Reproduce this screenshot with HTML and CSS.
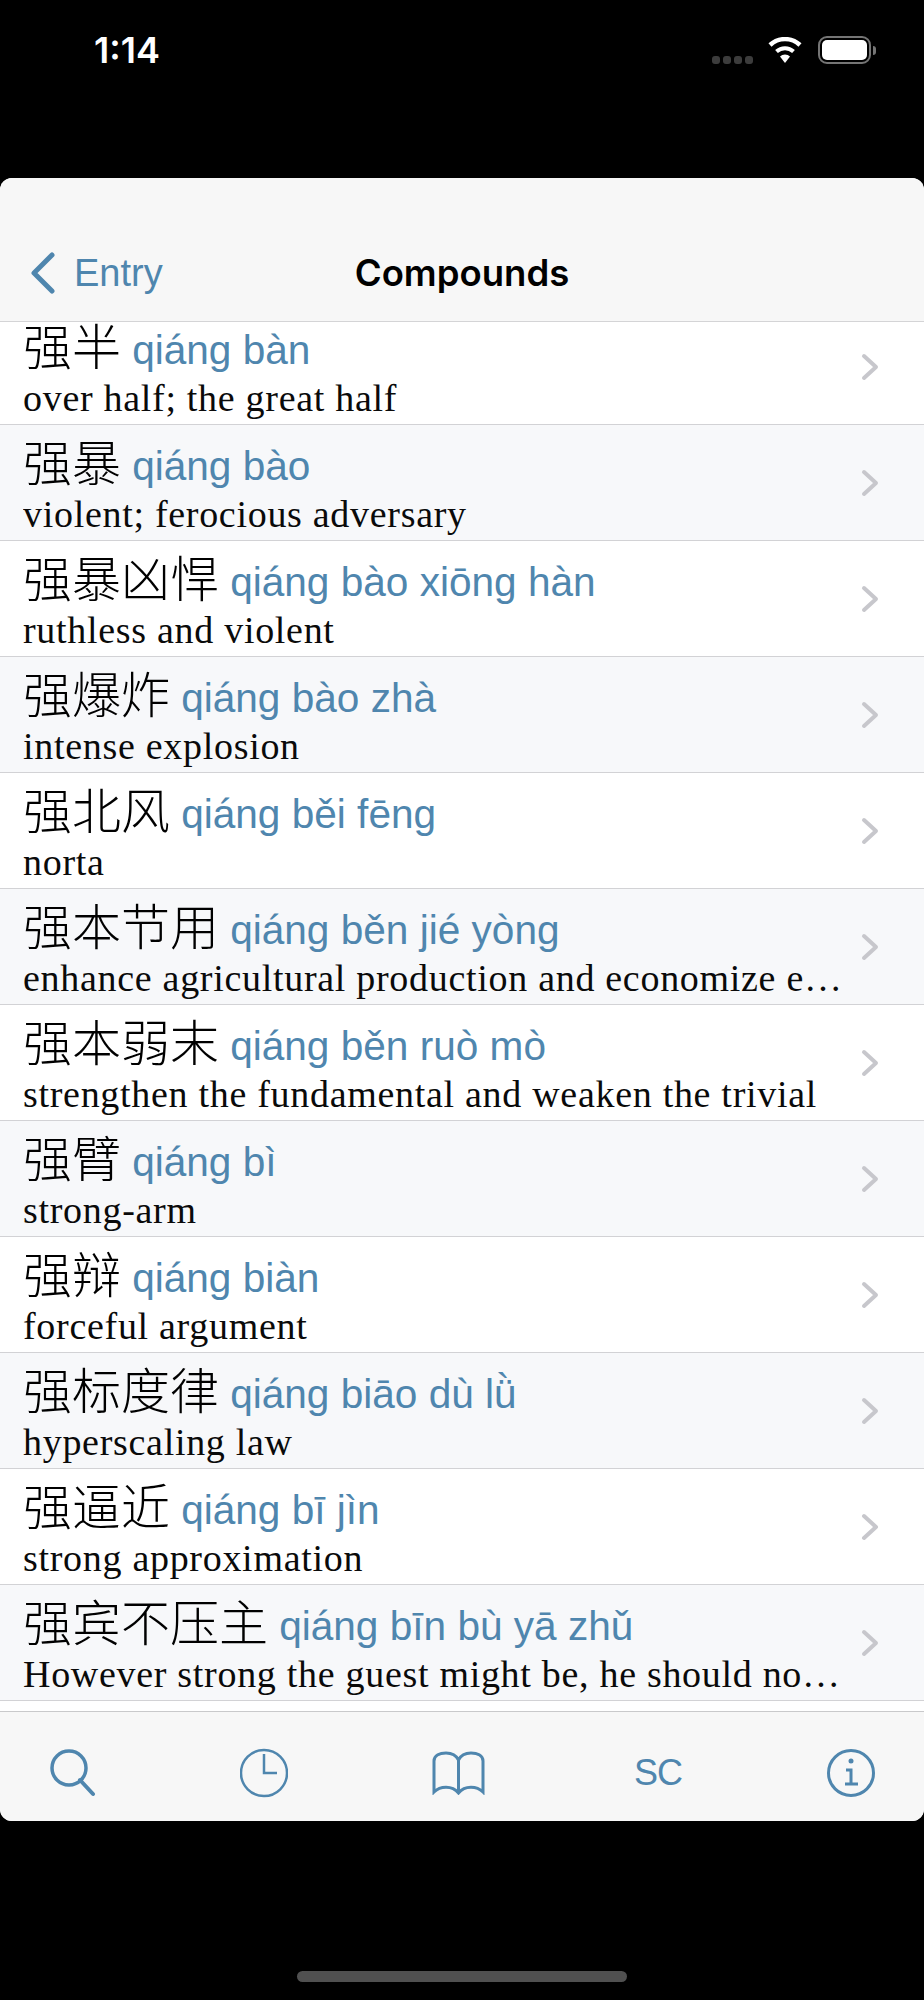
FILE: index.html
```html
<!DOCTYPE html>
<html lang="en">
<head>
    <meta charset="UTF-8">
    <meta name="viewport" content="width=device-width, initial-scale=1.0">
    <title>Compounds</title>
    <link rel="stylesheet" href="styles.css">
</head>
<body>
    <div class="status-bar">
        <span class="status-time">1:14</span>
        <div class="status-icons">
            <div class="signal"><i></i><i></i><i></i><i></i></div>
            <svg class="wifi" width="36" height="26" viewBox="0 0 36 26">
                <path d="M18 26l-5-6.500a7 7 0 0 1 10 0z" fill="#fff"/>
                <path d="M9.500 14.500a12.500 12.500 0 0 1 17 0" fill="none" stroke="#fff" stroke-width="4"/>
                <path d="M3 8a22 22 0 0 1 30 0" fill="none" stroke="#fff" stroke-width="4.500"/>
            </svg>
            <div class="battery"><div class="battery-level"></div></div>
            <div class="battery-nub"></div>
        </div>
    </div>

    <div class="panel">
        <div class="nav-bar">
            <div class="nav-back">
                <svg width="25" height="42" viewBox="0 0 25 42">
                    <path d="M22 3L4 21l18 18" fill="none" stroke="#4f86ae" stroke-width="5" stroke-linecap="round" stroke-linejoin="round"/>
                </svg>
                <span>Entry</span>
            </div>
            <div class="nav-title">Compounds</div>
        </div>

        <div class="list">
            <div class="list-inner">
                <div class="row">
                    <div class="row-text">
                        <div class="row-head"><span class="hanzi">强半</span> <span class="pinyin">qiáng bàn</span></div>
                        <div class="row-def">over half; the great half</div>
                    </div>
                    <svg class="chevron" width="18" height="28" viewBox="0 0 18 28"><path d="M3 3l12 11L3 25" /></svg>
                </div>
                <div class="row">
                    <div class="row-text">
                        <div class="row-head"><span class="hanzi">强暴</span> <span class="pinyin">qiáng bào</span></div>
                        <div class="row-def">violent; ferocious adversary</div>
                    </div>
                    <svg class="chevron" width="18" height="28" viewBox="0 0 18 28"><path d="M3 3l12 11L3 25" /></svg>
                </div>
                <div class="row">
                    <div class="row-text">
                        <div class="row-head"><span class="hanzi">强暴凶悍</span> <span class="pinyin">qiáng bào xiōng hàn</span></div>
                        <div class="row-def">ruthless and violent</div>
                    </div>
                    <svg class="chevron" width="18" height="28" viewBox="0 0 18 28"><path d="M3 3l12 11L3 25" /></svg>
                </div>
                <div class="row">
                    <div class="row-text">
                        <div class="row-head"><span class="hanzi">强爆炸</span> <span class="pinyin">qiáng bào zhà</span></div>
                        <div class="row-def">intense explosion</div>
                    </div>
                    <svg class="chevron" width="18" height="28" viewBox="0 0 18 28"><path d="M3 3l12 11L3 25" /></svg>
                </div>
                <div class="row">
                    <div class="row-text">
                        <div class="row-head"><span class="hanzi">强北风</span> <span class="pinyin">qiáng běi fēng</span></div>
                        <div class="row-def">norta</div>
                    </div>
                    <svg class="chevron" width="18" height="28" viewBox="0 0 18 28"><path d="M3 3l12 11L3 25" /></svg>
                </div>
                <div class="row">
                    <div class="row-text">
                        <div class="row-head"><span class="hanzi">强本节用</span> <span class="pinyin">qiáng běn jié yòng</span></div>
                        <div class="row-def">enhance agricultural production and economize expenditure</div>
                    </div>
                    <svg class="chevron" width="18" height="28" viewBox="0 0 18 28"><path d="M3 3l12 11L3 25" /></svg>
                </div>
                <div class="row">
                    <div class="row-text">
                        <div class="row-head"><span class="hanzi">强本弱末</span> <span class="pinyin">qiáng běn ruò mò</span></div>
                        <div class="row-def">strengthen the fundamental and weaken the trivial</div>
                    </div>
                    <svg class="chevron" width="18" height="28" viewBox="0 0 18 28"><path d="M3 3l12 11L3 25" /></svg>
                </div>
                <div class="row">
                    <div class="row-text">
                        <div class="row-head"><span class="hanzi">强臂</span> <span class="pinyin">qiáng bì</span></div>
                        <div class="row-def">strong-arm</div>
                    </div>
                    <svg class="chevron" width="18" height="28" viewBox="0 0 18 28"><path d="M3 3l12 11L3 25" /></svg>
                </div>
                <div class="row">
                    <div class="row-text">
                        <div class="row-head"><span class="hanzi">强辩</span> <span class="pinyin">qiáng biàn</span></div>
                        <div class="row-def">forceful argument</div>
                    </div>
                    <svg class="chevron" width="18" height="28" viewBox="0 0 18 28"><path d="M3 3l12 11L3 25" /></svg>
                </div>
                <div class="row">
                    <div class="row-text">
                        <div class="row-head"><span class="hanzi">强标度律</span> <span class="pinyin">qiáng biāo dù lǜ</span></div>
                        <div class="row-def">hyperscaling law</div>
                    </div>
                    <svg class="chevron" width="18" height="28" viewBox="0 0 18 28"><path d="M3 3l12 11L3 25" /></svg>
                </div>
                <div class="row">
                    <div class="row-text">
                        <div class="row-head"><span class="hanzi">强逼近</span> <span class="pinyin">qiáng bī jìn</span></div>
                        <div class="row-def">strong approximation</div>
                    </div>
                    <svg class="chevron" width="18" height="28" viewBox="0 0 18 28"><path d="M3 3l12 11L3 25" /></svg>
                </div>
                <div class="row">
                    <div class="row-text">
                        <div class="row-head"><span class="hanzi">强宾不压主</span> <span class="pinyin">qiáng bīn bù yā zhǔ</span></div>
                        <div class="row-def">However strong the guest might be, he should not overshadow the host</div>
                    </div>
                    <svg class="chevron" width="18" height="28" viewBox="0 0 18 28"><path d="M3 3l12 11L3 25" /></svg>
                </div>
            </div>
        </div>

        <div class="tab-bar">
            <svg width="46" height="48" viewBox="0 0 46 48" class="tab-icon tab-search">
                <circle cx="19" cy="19" r="17" />
                <path d="M30 31l13 14" stroke-width="4" stroke-linecap="round"/>
            </svg>
            <svg width="48" height="50" viewBox="0 0 48 50" class="tab-icon tab-thin">
                <circle cx="24" cy="25" r="23" />
                <path d="M24 6v19h13" />
            </svg>
            <svg width="53" height="44" viewBox="0 0 53 44" class="tab-icon">
                <path d="M26.500 9C24 4 19 2 14 2 8 2 2 4 2 10v31c6-6 18-7 24.500 1C33 34 45 35 51 41V10c0-6-6-8-12-8-5 0-10 2-12.500 7z" />
                <path d="M26.500 9v33" />
            </svg>
            <div class="tab-sc">SC</div>
            <svg width="48" height="50" viewBox="0 0 48 50" class="tab-icon">
                <circle cx="24" cy="25" r="22.500" />
                <circle cx="24" cy="13" r="2.500" class="tab-dot"/>
                <path d="M19 22h5v14M18 36h13" />
            </svg>
        </div>
    </div>

    <div class="home-bar"></div>
</body>
</html>
```

FILE: styles.css
```css
body {
    margin: 0;
    height: 2000px;
    background-color: #000;
    font-family: "Liberation Sans", Arial, sans-serif;
    display: flex;
    flex-direction: column;
    overflow: hidden;
}

/* status bar */
.status-bar {
    height: 178px;
    flex-shrink: 0;
    box-sizing: border-box;
    padding: 32px 48px 0 94px;
    display: flex;
    justify-content: space-between;
    align-items: flex-start;
    color: #fff;
}

.status-time {
    font-family: Inter, sans-serif;
    font-size: 36px;
    font-weight: 600;
    line-height: 36px;
}

.status-icons {
    display: flex;
    align-items: center;
    margin-top: 4px;
}

.signal {
    display: flex;
    gap: 3px;
    margin-top: 20px;
    margin-right: 14px;
}

.signal i {
    width: 8px;
    height: 8px;
    border-radius: 3px;
    background-color: #3c3c3c;
}

.wifi {
    margin-right: 15px;
}

.battery {
    width: 53px;
    height: 28px;
    box-sizing: border-box;
    border: 2px solid #757575;
    border-radius: 9px;
    padding: 2px;
}

.battery-level {
    height: 100%;
    background-color: #fff;
    border-radius: 5px;
}

.battery-nub {
    width: 3px;
    height: 9px;
    margin-left: 2px;
    background-color: #757575;
    border-radius: 0 3px 3px 0;
}

/* main panel */
.panel {
    height: 1643px;
    flex-shrink: 0;
    display: flex;
    flex-direction: column;
    background-color: #fff;
    border-radius: 12px;
    overflow: hidden;
}

.nav-bar {
    height: 144px;
    flex-shrink: 0;
    box-sizing: border-box;
    padding: 53px 0 0 30px;
    display: grid;
    grid-template-columns: 1fr auto 1fr;
    grid-template-rows: 84px;
    align-items: center;
    background-color: #f7f7f7;
    border-bottom: 1px solid #d4d4d6;
}

.nav-back {
    display: flex;
    align-items: center;
    gap: 19px;
    font-size: 38px;
    color: #4f86ae;
}

.nav-title {
    font-family: Inter, sans-serif;
    font-size: 36.500px;
    font-weight: 600;
    color: #000;
    margin-left: -30px;
}

/* list */
.list {
    flex: 1;
    overflow: hidden;
    background-color: #fff;
}

.list-inner {
    margin-top: -13px;
}

.row {
    height: 116px;
    box-sizing: border-box;
    padding: 0 45px 0 23px;
    display: flex;
    align-items: center;
    border-bottom: 1px solid #d2d2d5;
    background-color: #fff;
}

.row:nth-child(even) {
    background-color: #f7f8fa;
}

.row-text {
    flex: 1;
    min-width: 0;
}

.row-head {
    height: 56px;
    line-height: 56px;
    font-size: 40px;
    white-space: nowrap;
}

.hanzi {
    font-family: "Noto Sans CJK SC", sans-serif;
    font-size: 49px;
    font-weight: 300;
    color: #000;
}

.pinyin {
    font-size: 40.600px;
    color: #4f86ae;
    vertical-align: 1.500px;
}

.row-def {
    margin: 3px 0 -3px;
    font-family: "Liberation Serif", "Times New Roman", serif;
    font-size: 38px;
    letter-spacing: 0.700px;
    line-height: 46px;
    color: #0a0a0a;
    white-space: nowrap;
    overflow: hidden;
    text-overflow: ellipsis;
}

.chevron {
    flex-shrink: 0;
    margin-left: 16px;
}

.chevron path {
    fill: none;
    stroke: #c7c7cc;
    stroke-width: 4;
    stroke-linecap: round;
    stroke-linejoin: round;
}

/* tab bar */
.tab-bar {
    height: 110px;
    flex-shrink: 0;
    box-sizing: border-box;
    padding: 12px 0 0 50px;
    display: flex;
    align-items: center;
    gap: 144px;
    background-color: #f7f7f7;
    border-top: 1px solid #c9c9cb;
}

.tab-icon {
    flex-shrink: 0;
    fill: none;
    stroke: #4f86ae;
    stroke-width: 3;
}

.tab-search {
    stroke-width: 3.500;
}

.tab-thin {
    stroke-width: 2.500;
}

.tab-dot {
    fill: #4f86ae;
    stroke: none;
}

.tab-sc {
    width: 48px;
    margin: 0 1px 0 5px;
    font-size: 36px;
    letter-spacing: -1px;
    text-align: center;
    color: #4f86ae;
}

/* home indicator */
.home-bar {
    width: 330px;
    height: 11px;
    margin: 150px auto 0;
    border-radius: 6px;
    background-color: #505050;
}
```
